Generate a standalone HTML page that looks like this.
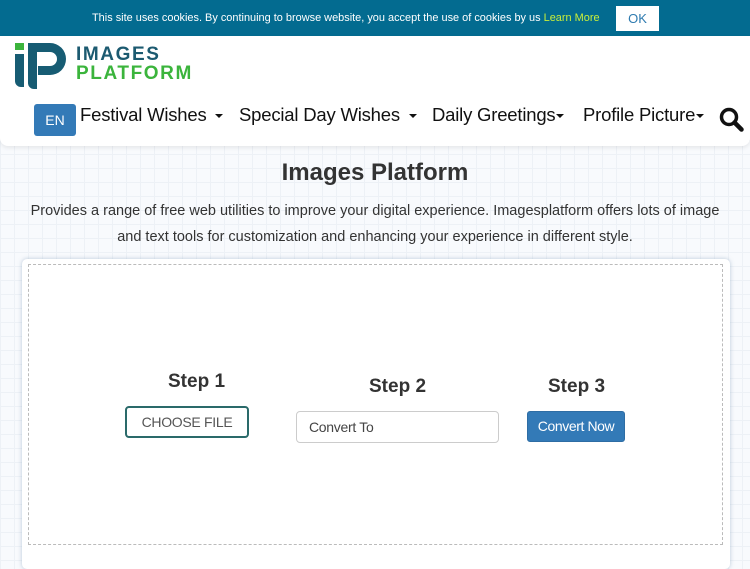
<!DOCTYPE html>
<html><head><meta charset="utf-8"><style>
*{margin:0;padding:0;box-sizing:border-box}
body{width:750px;height:563px;overflow:hidden;font-family:"Liberation Sans",sans-serif;background:#f8fafd;background-image:linear-gradient(#edf1f6 1px,transparent 1px),linear-gradient(90deg,#edf1f6 1px,transparent 1px);background-size:14px 14px;position:relative}
.ck{position:absolute;left:0;top:0;width:750px;height:36px;background:#036b90;color:#fff;font-size:11.3px}
.ck span{position:absolute;left:92px;top:12px;white-space:nowrap;transform:scaleX(0.968);transform-origin:left center}
.ck b{font-weight:normal;color:#c8ee3a}
.ok{position:absolute;left:616px;top:6px;width:43px;height:25px;background:#fff;color:#2e7bb0;font-size:13px;text-align:center;line-height:25px}
.hd{position:absolute;left:0;top:36px;width:750px;height:110px;background:#fff;border-radius:0 0 8px 8px;box-shadow:0 2px 4px rgba(0,0,0,.08)}
.lt{position:absolute;font-weight:bold;font-size:19px;letter-spacing:1.6px;line-height:19px}
.en{position:absolute;left:34px;top:104px;width:42px;height:32px;background:#337ab7;border-radius:3px;color:#fff;font-size:14px;text-align:center;line-height:32px}
.nav{position:absolute;top:104px;font-size:18.5px;color:#111;white-space:nowrap;letter-spacing:-0.2px}
.car{display:inline-block;border-left:4px solid transparent;border-right:4px solid transparent;border-top:4px solid #111;vertical-align:middle;margin-left:4px}
h1{position:absolute;top:159px;left:0;width:750px;text-align:center;font-size:24px;color:#333}
.p{position:absolute;top:198px;left:25px;width:700px;text-align:center;font-size:14.5px;color:#333;line-height:26px}
.box{position:absolute;left:22px;top:259px;width:708px;height:310px;background:#fff;border-radius:5px;box-shadow:0 0 4px rgba(120,150,180,.5)}
.in{position:absolute;left:6px;top:5px;width:695px;height:281px;border:1px dashed #bbb}
.st{position:absolute;font-size:19px;font-weight:bold;color:#333}
</style></head><body>
<div class="ck"><span>This site uses cookies. By continuing to browse website, you accept the use of cookies by us <b>Learn More</b></span><div class="ok">OK</div></div>
<div class="hd">
<svg style="position:absolute;left:14px;top:7px" width="56" height="46" viewBox="0 0 56 46"><rect x="1" y="0" width="9" height="7" fill="#3bb43c"/><path d="M1 11h9v33h-3a6 6 0 0 1-6-6z" fill="#175c73"/><path d="M14 0h22a16 16 0 0 1 0 32h-12v-9h12a7 7 0 0 0 0-14h-13v37h-3a6 6 0 0 1-6-6z" fill="#175c73"/></svg>
<div class="lt" style="left:76px;top:9px;color:#1c5a70">IMAGES</div>
<div class="lt" style="left:76px;top:28px;color:#3bb43c">PLATFORM</div>
</div>
<div class="en">EN</div>
<div class="nav" style="left:80px">Festival Wishes <span class="car"></span></div>
<div class="nav" style="left:239px">Special Day Wishes <span class="car"></span></div>
<div class="nav" style="left:432px">Daily Greetings<span class="car" style="margin-left:1px"></span></div>
<div class="nav" style="left:583px">Profile Picture<span class="car" style="margin-left:1px"></span></div>
<svg style="position:absolute;left:719px;top:107px" width="26" height="26" viewBox="0 0 26 26"><circle cx="10" cy="10" r="7.5" fill="none" stroke="#111" stroke-width="3.5"/><path d="M15.5 15.5l7 7" stroke="#111" stroke-width="4.5" stroke-linecap="round"/></svg>
<h1>Images Platform</h1>
<div class="p">Provides a range of free web utilities to improve your digital experience. Imagesplatform offers lots of image and text tools for customization and enhancing your experience in different style.</div>
<div class="box"><div class="in"></div></div>
<div class="st" style="left:168px;top:371px">Step 1</div>
<div class="st" style="left:369px;top:376px">Step 2</div>
<div class="st" style="left:548px;top:376px">Step 3</div>
<div style="position:absolute;left:125px;top:406px;width:124px;height:32px;border:2px solid #2a6a6a;border-radius:4px;background:#fff;color:#555;font-size:14px;text-align:center;line-height:28px;letter-spacing:-0.3px">CHOOSE FILE</div>
<div style="position:absolute;left:296px;top:411px;width:203px;height:32px;border:1px solid #ccc;border-radius:4px;background:#fff;color:#444;font-size:14px;padding-left:12px;line-height:30px;letter-spacing:-0.3px">Convert To</div>
<div style="position:absolute;left:527px;top:411px;width:98px;height:31px;background:#337ab7;border:1px solid #2e6da4;border-radius:3px;color:#fff;font-size:14px;text-align:center;line-height:29px;letter-spacing:-0.4px">Convert Now</div>
</body></html>
